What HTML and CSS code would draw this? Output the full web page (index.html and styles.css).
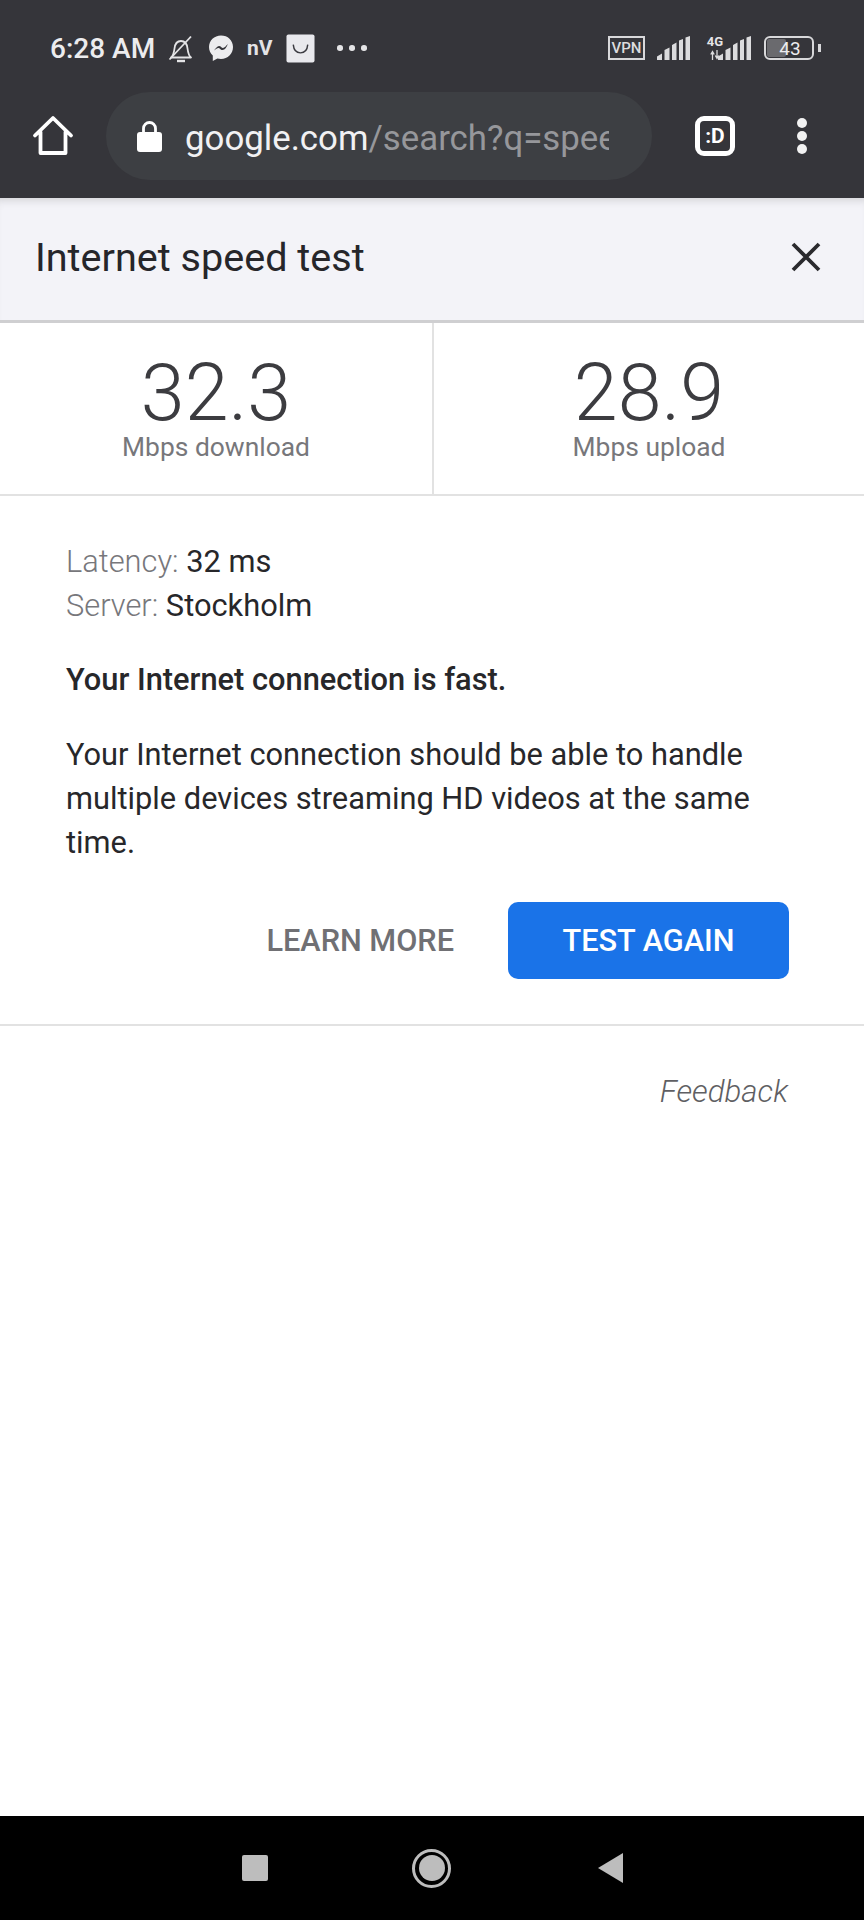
FILE: index.html
```html
<!DOCTYPE html>
<html lang="en">
<head>
<meta charset="utf-8">
<title>Internet speed test</title>
<link rel="stylesheet" href="styles.css">
</head>
<body>
<div class="phone">
  <header class="chrome">
    <div class="status">
      <div class="status-left">
        <span class="time">6:28 AM</span>
        <svg class="ic-bell" viewBox="0 0 26 28"><path d="M3 22.500c2.500-2 3-5 3.500-9C7 9 9.500 6 13 6s6 3 6.500 7.500c.5 4 1 7 3.500 9z" fill="none" stroke="#e4e4e6" stroke-width="1.800" stroke-linejoin="round"/><path d="M9 26h8" stroke="#e4e4e6" stroke-width="2.400"/><path d="M1.500 24.500L23 1.500" stroke="#e4e4e6" stroke-width="1.800"/></svg>
        <svg class="ic-msg" viewBox="0 0 26 28"><path d="M13 1.500C6.200 1.500 1 6.500 1 13c0 3.400 1.400 6.400 3.800 8.400V27l4.600-2.600c1.100.3 2.300.5 3.600.5 6.800 0 12-5.200 12-11.900S19.800 1.500 13 1.500z" fill="#ececee"/><path d="M6 16.500c2-2.200 3-4.500 5-4.500s2.500 2 4 2 3-2.300 5-4c-1.500 3-3 6-5.500 6s-2.500-2-4-2-2.500 1.300-4.500 2.500z" fill="#35353a"/></svg>
        <span class="nv">nV</span>
        <svg class="ic-bag" viewBox="0 0 30 30"><rect x="0.500" y="0.500" width="29" height="29" rx="2" fill="#e9e9ed"/><path d="M7.500 11c.5 5.500 3.500 8.500 7.500 8.500s7-3 7.500-8.500" fill="none" stroke="#3a3a40" stroke-width="1.500"/></svg>
        <span class="dots"><i></i><i></i><i></i></span>
      </div>
      <div class="status-right">
        <span class="vpn">VPN</span>
        <svg class="ic-sig" viewBox="0 0 33 24"><path d="M0 24v-3.500l5-3V24zM7.500 24v-10l5-2.500V24zM15 24V9l4.500-2.500V24zM22 24V4.500l4-1.500v21zM28.500 24V1.500L33 0v24z" fill="#dcdcde"/></svg>
        <span class="net">
          <span class="net-tag"><b>4G</b><svg viewBox="0 0 10 10"><path d="M2.500 10V3M.8 4.500l1.700-3 1.700 3M7 0v7M5.300 5.500L7 8.500l1.700-3" fill="none" stroke="#dcdcde" stroke-width="1.300"/></svg></span>
          <svg class="ic-sig ic-sig-b" viewBox="0 0 33 24"><path d="M0 24v-3.500l5-3V24zM7.500 24v-10l5-2.500V24zM15 24V9l4.500-2.500V24zM22 24V4.500l4-1.500v21zM28.500 24V1.500L33 0v24z" fill="#dcdcde"/></svg>
        </span>
        <span class="battery"><span class="batt-body"><span class="batt-fill"></span><span class="batt-num">43</span></span><span class="batt-tip"></span></span>
      </div>
    </div>
    <div class="toolbar">
      <svg class="ic-home" viewBox="0 0 42 42"><path d="M3 20.500L21 3l18 17.500M8.500 17v21h25V17" fill="none" stroke="#fff" stroke-width="3.800" stroke-linecap="round" stroke-linejoin="round"/></svg>
      <div class="omnibox">
        <svg class="ic-lock" viewBox="0 0 25 32"><path d="M6.500 13V8.500a6 6 0 0 1 12 0V13" fill="none" stroke="#fff" stroke-width="2.800"/><rect x="0" y="12" width="25" height="20" rx="3" fill="#fff"/></svg>
        <div class="url"><span class="host">google.com</span><span class="path">/search?q=speed</span></div>
      </div>
      <div class="tabs">:D</div>
      <span class="kebab"><i></i><i></i><i></i></span>
    </div>
  </header>

  <main class="page">
    <div class="title-bar">
      <h1 class="title">Internet speed test</h1>
      <svg class="ic-close" viewBox="0 0 30 30"><path d="M2 2l26 26M28 2L2 28" stroke="#2a2a2e" stroke-width="3.800" fill="none"/></svg>
    </div>
    <div class="results">
      <div class="result"><div class="value">32.3</div><div class="label">Mbps download</div></div>
      <div class="result"><div class="value">28.9</div><div class="label">Mbps upload</div></div>
    </div>
    <div class="details">
      <div class="metrics">
        <div class="metric"><span class="key">Latency:</span> 32 ms</div>
        <div class="metric"><span class="key">Server:</span> Stockholm</div>
      </div>
      <p class="verdict">Your Internet connection is fast.</p>
      <p class="desc">Your Internet connection should be able to handle multiple devices streaming HD videos at the same time.</p>
      <div class="actions">
        <span class="learn">LEARN MORE</span>
        <span class="again">TEST AGAIN</span>
      </div>
    </div>
    <div class="feedback-row"><span class="feedback">Feedback</span></div>
  </main>

  <footer class="nav">
    <span class="nav-square"></span>
    <span class="nav-circle"><i></i></span>
    <svg class="nav-back" viewBox="0 0 25 30"><path d="M25 0v30L0 15z" fill="#bdbdbd"/></svg>
  </footer>
</div>
</body>
</html>
```
FILE: styles.css
```css
* { box-sizing: border-box; }
html, body { margin: 0; padding: 0; }
body { font-family: Roboto, "Liberation Sans", sans-serif; background: #fff; }
.phone { width: 864px; height: 1920px; display: flex; flex-direction: column; overflow: hidden; }

.chrome { height: 198px; background: #35353a; padding: 29px 0 0; flex: none; }
.status { display: flex; justify-content: space-between; align-items: center; height: 38px; padding: 0 43px 0 50px; }
.status-left { display: flex; align-items: center; }
.time { font-size: 28px; font-weight: 500; color: #ececee; width: 118px; white-space: nowrap; }
.ic-bell { width: 26px; height: 28px; margin-top: 1px; }
.ic-msg { width: 26px; height: 28px; margin-left: 14px; }
.nv { font-size: 21px; font-weight: 700; color: #e4e4e6; margin-left: 13px; width: 26px; }
.ic-bag { width: 29px; height: 29px; margin-left: 13px; }
.dots { display: flex; gap: 6.500px; margin-left: 22px; }
.dots i { width: 5.500px; height: 5.500px; border-radius: 50%; background: #e4e4e6; }
.status-right { display: flex; align-items: center; }
.vpn { width: 37px; height: 24px; border: 2px solid #d8d8da; font-size: 15px; font-weight: 500; color: #dcdcde; display: flex; align-items: center; justify-content: center; }
.ic-sig { width: 33px; height: 24px; margin-left: 12px; }
.net { display: flex; align-items: flex-end; margin-left: 17px; }
.net-tag { display: flex; flex-direction: column; align-items: center; width: 16px; }
.net-tag b { font-size: 13px; line-height: 12px; color: #e4e4e6; }
.net-tag svg { width: 10px; height: 10px; margin-top: 2px; }
.ic-sig-b { margin-left: -5px; }
.battery { display: flex; align-items: center; margin-left: 13px; }
.batt-body { position: relative; width: 50px; height: 24px; border: 2.500px solid #d8d8da; border-radius: 6px; display: flex; align-items: center; justify-content: center; }
.batt-fill { position: absolute; left: 1px; top: 1px; bottom: 1px; width: 19px; background: #6a6a6e; border-radius: 2px; }
.batt-num { position: relative; font-size: 19px; color: #ececee; margin-left: 2px; }
.batt-tip { width: 3px; height: 8px; margin-left: 4px; background: #d8d8da; }

.toolbar { display: flex; align-items: center; height: 131px; padding-top: 7px; }
.ic-home { width: 42px; height: 42px; margin-left: 32px; flex: none; }
.omnibox { width: 546px; height: 88px; margin-left: 32px; border-radius: 44px; background: #3d3f43; display: flex; align-items: center; padding-left: 31px; flex: none; }
.ic-lock { width: 25px; height: 32px; flex: none; }
.url { margin-left: 23px; padding-top: 4px; width: 424px; overflow: hidden; white-space: nowrap; font-size: 34.800px; }
.host { color: #f1f1f3; }
.path { color: #96979b; }
.tabs { width: 40px; height: 40px; margin-left: 43px; border: 5px solid #fff; border-radius: 9px; color: #fff; font-size: 21px; font-weight: 700; display: flex; align-items: center; justify-content: center; flex: none; }
.kebab { display: flex; flex-direction: column; gap: 3px; margin-left: 62px; }
.kebab i { width: 10px; height: 10px; border-radius: 50%; background: #f2f2f2; }

.page { flex: 1; display: flex; flex-direction: column; background: #fff; }
.title-bar { height: 125px; background: #f3f3f8; border-bottom: 3px solid #cfcfd1; display: flex; align-items: flex-start; justify-content: space-between; padding: 0 43px 0 35px; box-shadow: inset 0 8px 8px -6px #d0d0d4; }
.title { margin: 37px 0 0; font-size: 39.600px; line-height: 46px; font-weight: 400; color: #26262a; }
.ic-close { width: 30px; height: 30px; margin-top: 44px; }
.results { display: grid; grid-template-columns: 432px 1fr; height: 173px; border-bottom: 2px solid #e2e2e2; }
.result { display: flex; flex-direction: column; align-items: center; }
.result + .result { border-left: 2px solid #e2e2e2; }
.value { font-size: 79px; line-height: 76px; font-weight: 300; color: #3c3c40; margin-top: 32px; }
.label { font-size: 26.400px; line-height: 30px; color: #77777b; margin-top: 1px; }
.details { padding: 44px 75px 0 66px; height: 530px; border-bottom: 2px solid #e2e2e2; flex: none; }
.metric { font-size: 30.800px; line-height: 44px; color: #27272a; }
.key { font-weight: 300; color: #77777b; }
.verdict { margin: 30px 0 0; font-size: 30.800px; line-height: 44px; font-weight: 500; color: #27272a; }
.desc { margin: 31px 0 0; font-size: 30.800px; line-height: 44px; color: #27272a; }
.actions { display: flex; align-items: center; justify-content: flex-end; margin-top: 37px; }
.learn { font-size: 30.700px; font-weight: 500; color: #707074; margin-right: 54px; }
.again { width: 281px; height: 77px; background: #1a73e8; border-radius: 10px; color: #fff; font-size: 30.700px; font-weight: 500; display: flex; align-items: center; justify-content: center; }
.feedback-row { display: flex; justify-content: flex-end; padding: 49px 76px 0 0; }
.feedback { font-size: 31.200px; line-height: 34px; font-style: italic; font-weight: 300; color: #5f5f63; }

.nav { margin-top: auto; height: 104px; background: #000; flex: none; display: flex; align-items: center; padding: 0 0 0 242px; }
.nav-square { width: 26px; height: 26px; background: #bdbdbd; border-radius: 2px; }
.nav-circle { width: 39px; height: 39px; margin-left: 144px; border: 3px solid #bdbdbd; border-radius: 50%; display: flex; align-items: center; justify-content: center; }
.nav-circle i { width: 26px; height: 26px; border-radius: 50%; background: #bdbdbd; }
.nav-back { width: 25px; height: 30px; margin-left: 147px; }
```
